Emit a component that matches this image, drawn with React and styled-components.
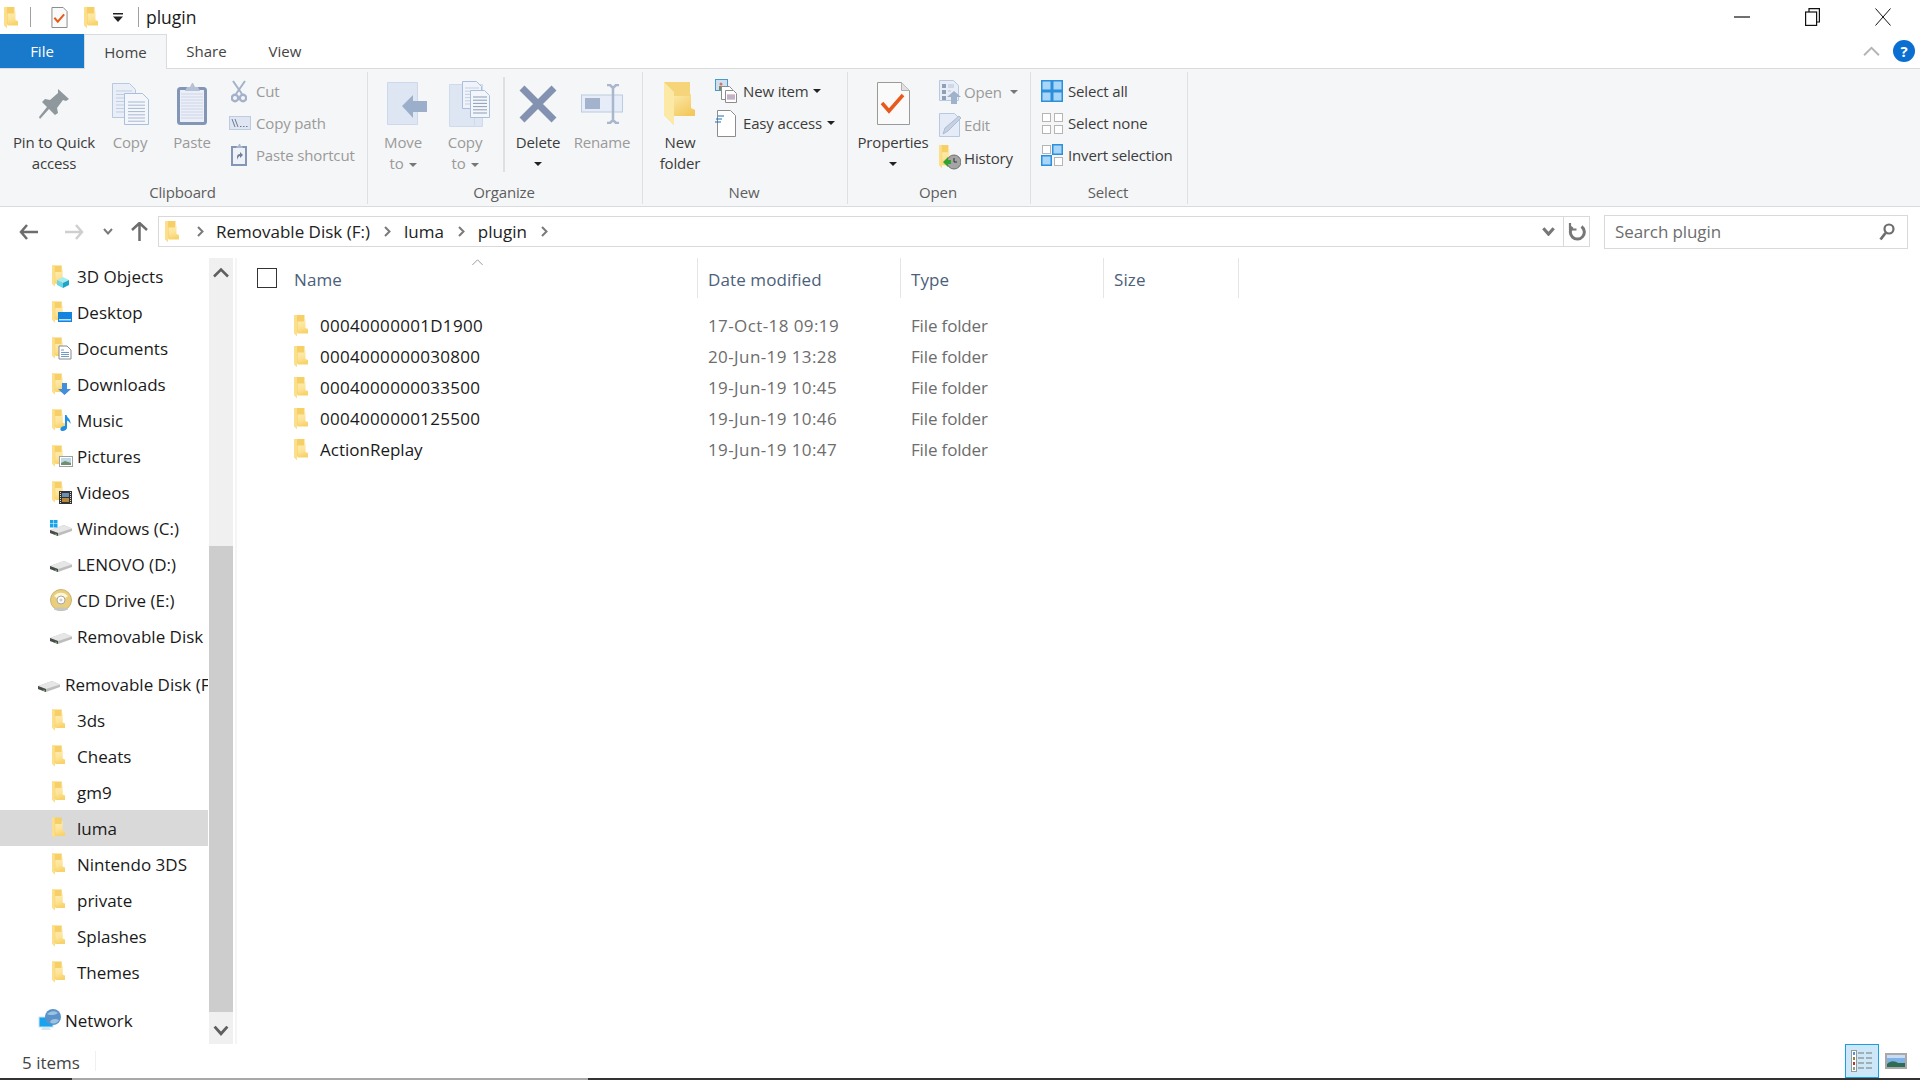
import React, { useId } from "react";
import styled, { createGlobalStyle } from "styled-components";

const Global = createGlobalStyle`
  html, body { margin: 0; padding: 0; height: 1080px; overflow: hidden; background: #fff; }
  body { font-family: "Open Sans", "Noto Sans", sans-serif; color: #1a1a1a; }
  * { box-sizing: border-box; }
`;

const Page = styled.div`
  width: 1920px; height: 1080px; display: flex; flex-direction: column; overflow: hidden; background: #fff;
`;

/* ---------- title bar ---------- */
const TitleBar = styled.div`display: flex; align-items: center; height: 34px; flex: none;`;
const QuickAccess = styled.div`display: flex; align-items: center; padding-left: 4px; flex: 1;`;
const VSep = styled.span`
  width: 1px; height: 20px; background: #a0a0a0; flex: none; margin-left: ${p => p.$ml}px;
`;
const QuickIcon = styled.span`display: flex; flex: none; margin-left: ${p => p.$ml || 0}px;`;
const WindowTitle = styled.span`margin-left: 7px; font-size: 17.5px; color: #1a1a1a;`;
const WinControls = styled.div`display: flex; align-items: center; padding-right: 29px; gap: 55px;`;

/* ---------- tabs ---------- */
const TabRow = styled.div`
  display: flex; align-items: stretch; height: 35px; flex: none; border-bottom: 1px solid #dadbdc; position: relative;
`;
const FileTab = styled.div`
  width: 84px; background: #1979ca; color: #fff; font-size: 15px;
  display: flex; align-items: center; justify-content: center;
`;
const Tab = styled.div`
  width: ${p => p.$w}px; display: flex; align-items: center; justify-content: center;
  font-size: 15px; color: #444; margin-bottom: ${p => (p.$active ? "-1px" : "0")};
  ${p => p.$active ? "background:#f5f6f7;border:1px solid #dadbdc;border-bottom:none;" : ""}
`;
const TabRight = styled.div`
  margin-left: auto; display: flex; align-items: center; gap: 13px; padding-right: 5px;
`;
const HelpDot = styled.div`
  width: 22px; height: 22px; border-radius: 50%; background: #0a6fd1; color: #fff;
  font-size: 15px; font-weight: 700; display: flex; align-items: center; justify-content: center;
`;

/* ---------- ribbon ---------- */
const Ribbon = styled.div`
  display: flex; height: 138px; flex: none; background: #f5f6f7; border-bottom: 1px solid #dadbdc;
  padding-top: 3px;
`;
const Group = styled.section`
  width: ${p => p.$w}px; flex: none; display: flex; flex-direction: column;
  border-right: 1px solid #dfe0e2; height: 132px;
`;
const GroupBody = styled.div`
  display: flex; flex: 1; padding-left: ${p => p.$pl}px; padding-top: 3px; min-height: 0;
`;
const GroupLabel = styled.div`
  height: 24px; text-align: center; font-size: 15px; letter-spacing: -0.15px; color: #5e5e5e; line-height: 24px;
  padding-right: 2px;
`;
const Large = styled.div`
  width: ${p => p.$w}px; flex: none; display: flex; flex-direction: column; align-items: center;
  color: ${p => (p.$off ? "#9a9a9a" : "#3c3c3c")}; font-size: 15px; letter-spacing: -0.15px;
`;
const LargeIcon = styled.div`
  height: 57px; display: flex; align-items: center; justify-content: center; flex: none;
  margin-left: ${p => p.$dx || 0}px;
`;
const LargeText = styled.div`line-height: 21px; text-align: center; white-space: nowrap;`;
const Caret = styled.span`
  display: inline-block; width: 0; height: 0; vertical-align: middle;
  border-left: 4px solid transparent; border-right: 4px solid transparent;
  border-top: 4px solid ${p => (p.$off ? "#777" : "#222")};
  margin-left: ${p => p.$ml ?? 5}px;
`;
const CaretLine = styled.div`height: 21px; display: flex; align-items: center; justify-content: center;`;
const VDivider = styled.div`width: 2px; flex: none; background: #dfe0e2; margin: 2px 1px 8px 7px;`;
const Stack = styled.div`display: flex; flex-direction: column; margin-left: ${p => p.$ml || 0}px;`;
const Small = styled.div`
  height: ${p => p.$h || 32}px; display: flex; align-items: center; white-space: nowrap;
  color: ${p => (p.$off ? "#9a9a9a" : "#3c3c3c")}; font-size: 15px; letter-spacing: -0.15px;
`;
const SmallIcon = styled.span`
  width: ${p => p.$w || 28}px; flex: none; display: flex; align-items: center;
  padding-left: ${p => p.$dx || 0}px;
`;

/* ---------- address row ---------- */
const AddressRow = styled.div`display: flex; align-items: center; height: 51px; flex: none; padding-bottom: 2px;`;
const NavButtons = styled.div`display: flex; align-items: center; width: 158px; flex: none; padding-left: 19px;`;
const NavBtn = styled.span`display: flex; margin-left: ${p => p.$ml || 0}px;`;
const AddressBox = styled.div`
  width: 1432px; height: 31px; flex: none; border: 1px solid #d9d9d9; display: flex; align-items: center;
  padding-left: 6px; font-size: 17px; color: #222;
`;
const Crumb = styled.span`margin-left: ${p => p.$ml}px; white-space: nowrap;`;
const Chev = styled.span`display: flex; margin-left: ${p => p.$ml}px;`;
const AddressEnd = styled.div`margin-left: auto; display: flex; align-items: center; height: 100%;`;
const Refresh = styled.div`
  width: 26px; height: 100%; border-left: 1px solid #d9d9d9; display: flex; align-items: center; justify-content: center;
  margin-left: 8px;
`;
const Search = styled.div`
  width: 304px; height: 34px; flex: none; margin-left: 14px; border: 1px solid #d9d9d9; display: flex; align-items: center;
  padding: 0 12px 0 10px; justify-content: space-between; font-size: 17px; letter-spacing: -0.1px; color: #6d6d6d;
`;

/* ---------- main area ---------- */
const Main = styled.div`display: flex; flex: 1; min-height: 0;`;
const NavPane = styled.nav`width: 208px; flex: none; overflow: hidden; margin-right: 1px;`;
const NavRow = styled.div`
  height: 36px; display: flex; align-items: center; gap: 3px; white-space: nowrap; font-size: 17px;
  padding-left: ${p => p.$pl}px; margin-top: ${p => p.$mt || 0}px; color: #1a1a1a;
  background: ${p => (p.$sel ? "#d9d9d9" : "transparent")};
`;
const NavIconBox = styled.span`width: 24px; height: 24px; flex: none; display: flex;`;
const Scrollbar = styled.div`
  width: 24px; flex: none; background: #f0f0f0; display: flex; flex-direction: column;
`;
const ScrollBtn = styled.div`
  height: ${p => p.$h}px; flex: none; display: flex; align-items: center; justify-content: center;
  padding: ${p => p.$pt || 0}px 0 ${p => p.$pb || 0}px;
`;
const ScrollThumb = styled.div`flex: 1; background: #cdcdcd;`;
const PaneGap = styled.div`width: 2px; flex: none; margin-left: 2px; background: #f5f5f5;`;

const Content = styled.div`flex: 1; min-width: 0; position: relative;`;
const SortArrow = styled.span`position: absolute; left: 234px; top: 0; display: flex;`;
const HeaderRow = styled.div`display: flex; align-items: stretch; height: 40px; margin-bottom: 12px; padding-left: 20px;`;
const CheckBox = styled.span`
  width: 20px; height: 20px; border: 1px solid #333; flex: none; margin: 10px 17px 0 0; background: #fff;
`;
const ColHead = styled.div`
  width: ${p => p.$w}px; flex: none; font-size: 17px; letter-spacing: 0.1px; color: #4c607a;
  padding: 9px 0 0 ${p => p.$pl}px; border-right: 1px solid #e5e5e5; line-height: 26px;
`;
const FileRow = styled.div`display: flex; align-items: center; height: 31px; padding-left: 57px; font-size: 17px;`;
const NameCell = styled.div`
  width: 404px; flex: none; display: flex; align-items: center; gap: 12px; color: #1a1a1a;
  letter-spacing: ${p => (p.$digits ? "0.3px" : "0")};
`;
const MetaCell = styled.div`
  width: 203px; flex: none; padding-left: 10px; color: #6d6d6d; font-size: 17px;
  letter-spacing: ${p => (p.$date ? "0.4px" : "-0.15px")};
`;

/* ---------- status ---------- */
const StatusBar = styled.div`height: 34px; flex: none; display: flex; align-items: center; padding-left: 22px; font-size: 17px; color: #444;`;
const StatusText = styled.span`margin-top: 2px;`;
const StatusSep = styled.span`width: 1px; height: 20px; background: #f0f0f0; margin-left: 15px;`;
const ViewSwitch = styled.div`margin-left: auto; display: flex; align-items: center; height: 100%; padding-right: 13px; gap: 6px;`;
const DetailsBtn = styled.div`
  width: 34px; height: 100%; border: 1px solid #1c9fdf; background: #cce8f8; display: flex; align-items: center; justify-content: center;
`;
const BottomStrip = styled.div`height: 2px; flex: none; display: flex;`;
const StripPart = styled.div`
  background: ${p => p.$c}; ${p => (p.$w ? `width:${p.$w}px;flex:none;` : "flex:1;")}
`;

/* ---------- drawings ---------- */
const FolderShape = ({ x = 0, y = 0, sx = 1, sy = 1 }) => {
  const id = useId();
  return (
    <g transform={`translate(${x} ${y}) scale(${sx} ${sy})`}>
      <defs>
        <linearGradient id={id} x1="0" y1="0" x2="0.2" y2="1">
          <stop offset="0" stopColor="#fdeeb5" />
          <stop offset="0.6" stopColor="#fce397" />
          <stop offset="1" stopColor="#f8d36a" />
        </linearGradient>
      </defs>
      <path d="M0 0h10.500v17.500H3V21L0 18z" fill="#f6cf66" />
      <path d="M0 0h3v21l-3-3z" fill="#fbdf8a" />
      <path d="M3.500 6.500h7V4l1 0v9l2.500 1v4.500H3.500z" fill={`url(#${id})`} />
    </g>
  );
};
const Folder = ({ w = 14, h = 21 }) => (
  <svg width={w} height={h} viewBox="0 0 14 21"><FolderShape /></svg>
);

const Cube = () => (
  <g>
    <path d="M7 16l6-3 6 3-6 3z" fill="#a8ecf0" />
    <path d="M7 16l6 3v5l-6-3z" fill="#6cd6e6" />
    <path d="M19 16l-6 3v5l6-3z" fill="#1ba5c9" />
  </g>
);
const NavIcon = ({ kind }) => (
  <svg width="24" height="24" viewBox="0 0 24 24">
    <FolderShape x={2} y={1.5} sx={0.93} />
    {kind === "3d" && <Cube />}
    {kind === "desktop" && <g><rect x="8" y="12" width="14" height="10" fill="#1584de" /><rect x="9" y="19" width="12" height="1.5" fill="#bfe2fb" /></g>}
    {kind === "docs" && <g><path d="M9 10h8l4 4v9H9z" fill="#fff" stroke="#8a8a8a" /><path d="M11 14h3M11 16.5h8M11 18.5h8M11 20.5h8" stroke="#6f9cc9" /></g>}
    {kind === "down" && <path d="M12 11h5v6h4l-6.5 6L8 17h4z" fill="#3f8fdc" />}
    {kind === "music" && <g><path d="M15 7l1.5 0c.5 3 4.5 4 4 9-.8-2-2-3-3.500-3.500V20c0 2-4 4-6 2.500s1-5 4-4.500z" fill="#1e8ee6" /></g>}
    {kind === "pics" && <g><rect x="9.500" y="12.500" width="13" height="10" fill="#fff" stroke="#a0a0a0" /><rect x="11" y="14" width="10" height="7" fill="#bfd8e8" /><path d="M11 19l4-2 6 2v2H11z" fill="#6f8f6f" /></g>}
    {kind === "vids" && <g><rect x="9" y="11" width="13" height="13" fill="#333" /><rect x="12" y="13" width="7" height="4" fill="#6a8fb0" /><rect x="12" y="18" width="7" height="4" fill="#b58a3a" /><path d="M10.500 12v11M20.500 12v11" stroke="#ddd" strokeDasharray="1 1" /></g>}
  </svg>
);
const Drive = ({ win }) => (
  <svg width="24" height="24" viewBox="1 0 24 24">
    <path d="M1 14l14-5 8 3.500v2.500l-14 5-8-3z" fill="#bdbdbd" />
    <path d="M1 14l14-5 8 3.500-14 4.500z" fill="#e6e6e6" />
    <path d="M1 14l8 3v3l-8-3z" fill="#4a4a4a" />
    <path d="M6 17.500l2 .8v1l-2-.8z" fill="#4fc35a" />
    {win && <g fill="#19a3e8"><rect x="1" y="4" width="3.500" height="3.500" /><rect x="5" y="4" width="3.500" height="3.500" /><rect x="1" y="8" width="3.500" height="3.500" /><rect x="5" y="8" width="3.500" height="3.500" /></g>}
  </svg>
);
const Cd = () => (
  <svg width="24" height="24" viewBox="1 0 24 24">
    <circle cx="12" cy="12" r="10.500" fill="#e9cf7c" stroke="#c8b274" />
    <path d="M5 8a9 9 0 0 1 14 0l-4 3a4 4 0 0 0-6 0z" fill="#fff6d8" />
    <circle cx="12" cy="12" r="4" fill="#fff" stroke="#a6a6a6" />
    <circle cx="12" cy="12" r="1.600" fill="#cfcfcf" />
    <ellipse cx="12" cy="21" rx="7" ry="1.800" fill="#c5c5c5" />
  </svg>
);
const Network = () => (
  <svg width="24" height="24" viewBox="0 0 24 24">
    <rect x="1" y="9" width="14" height="10" fill="#19a2ee" stroke="#c7e4f7" />
    <path d="M5 19h6l2 3H3z" fill="#d8e6ef" />
    <circle cx="15" cy="9" r="8" fill="#5b93c9" />
    <path d="M9 6c3-3 8-4 11-1-2 2-8 3-11 1zM12 14c1-3 5-4 9-2-1 3-6 5-9 2z" fill="#9cc2e2" />
  </svg>
);

const Pin = () => (
  <svg width="30" height="30" viewBox="0 0 30 30">
    <path d="M19 0l11 10-3 2-3-1-6 8 1 5-3 2-6-6-9 10-1-2 8-10-5-5 3-3 5 1 8-7z" fill="#8e989d" />
  </svg>
);
const pageLines = (x, y, w, n, step) => Array.from({ length: n }, (_, i) => `M${x} ${y + i * step}h${w}`).join("");
const CopyIcon = () => (
  <svg width="37" height="42" viewBox="0 0 37 42">
    <path d="M.5.5h17l6 6v28H.5z" fill="#eaeef7" stroke="#b7c8e0" />
    <path d={pageLines(4, 8, 16, 7, 3.500)} stroke="#c2cfe2" />
    <path d="M12.500 10.500h18l6 6v25h-24z" fill="#f3f6fb" stroke="#a9bfdc" />
    <path d={pageLines(16, 19, 17, 7, 3.200)} stroke="#a8b8cf" />
  </svg>
);
const PasteIcon = () => (
  <svg width="30" height="43" viewBox="0 0 30 43">
    <rect x="1.500" y="6.500" width="27" height="35" rx="2" fill="#eceff8" stroke="#8496b5" strokeWidth="3" />
    <path d={pageLines(4, 12, 22, 9, 3)} stroke="#ccd6e8" />
    <path d="M8 9l2-4h3l2-4h1l2 4h3l2 4z" fill="#b5c1d6" />
  </svg>
);
const Scissors = () => (
  <svg width="16" height="23" viewBox="0 0 16 23" fill="none" stroke="#a3b2ca" strokeWidth="2">
    <path d="M2 1l9 13M14 1L5 14" />
    <circle cx="4" cy="18" r="3.200" strokeWidth="2.400" /><circle cx="12" cy="18" r="3.200" strokeWidth="2.400" />
  </svg>
);
const CopyPathIcon = () => (
  <svg width="22" height="14" viewBox="0 0 22 14">
    <rect x=".5" y=".5" width="21" height="13" fill="#dfe6f2" stroke="#bccbe0" />
    <path d="M3 3l3 8M6 3l3 8" stroke="#6a7a94" strokeWidth="1" />
    <path d="M11 10.500h1.500M14 10.500h1.500M17 10.500h1.500" stroke="#6a7a94" />
  </svg>
);
const PasteShort = () => (
  <svg width="16" height="22" viewBox="0 0 16 22">
    <rect x="1" y="3" width="14" height="18" fill="#eef1f8" stroke="#8496b5" strokeWidth="2" />
    <path d="M5 4l1-2h1l1-2h1l1 2h1l1 2z" fill="#a9b6cc" />
    <path d="M6 16v-3c0-2 1-3 3-3V8l3 3-3 3v-2c-1 0-2 1-3 4z" fill="#6f7f98" />
  </svg>
);
const MoveTo = () => (
  <svg width="40" height="44" viewBox="0 0 40 44">
    <path d="M.5.500h30v42H.5z" fill="#dee6f3" stroke="#cdd9ea" />
    <path d="M15 24L26 13v6h14v11H26v6z" fill="#9cafca" />
  </svg>
);
const CopyTo = () => (
  <svg width="41" height="46" viewBox="0 0 41 46">
    <path d="M.5 3.500h33v42H.5z" fill="#dee6f3" stroke="#cfdaea" />
    <path d="M25.500 3.500v42" stroke="#cfdaea" />
    <path d="M13.500.5h14l5 5v22h-19z" fill="#f0f4fa" stroke="#a9bfdc" />
    <path d={pageLines(16, 7, 14, 6, 3.200)} stroke="#c2cfe2" />
    <path d="M21.500 9.500h14l5 5v22h-19z" fill="#f3f6fb" stroke="#a9bfdc" />
    <path d={pageLines(24, 16, 14, 6, 3.200)} stroke="#8c9db7" />
  </svg>
);
const DeleteIcon = () => (
  <svg width="38" height="38" viewBox="0 0 38 38"><path d="M3 3l32 32M35 3L3 35" stroke="#8292b0" strokeWidth="7" /></svg>
);
const RenameIcon = () => (
  <svg width="42" height="40" viewBox="0 0 42 40">
    <rect x=".5" y="11" width="41" height="17" fill="#e6edf8" stroke="#bccbe0" />
    <rect x="4" y="14" width="15" height="11" fill="#a4b3cd" />
    <path d="M26 1h3l3 3 3-3h3M32 4v31M26 39h3l3-3 3 3h3" stroke="#a9b7cd" strokeWidth="2.500" fill="none" />
  </svg>
);
const NewFolderIcon = () => {
  const id = useId();
  return (
    <svg width="32" height="43" viewBox="0 0 32 43">
      <defs>
        <linearGradient id={id} x1="0" y1="0" x2="0.6" y2="1">
          <stop offset="0" stopColor="#fce9a8" />
          <stop offset="1" stopColor="#f3c95f" />
        </linearGradient>
      </defs>
      <path d="M0 0h26v34H10v9l-10-10z" fill="#f6d479" />
      <path d="M0 0l10 10v33L0 33z" fill="#fde9a6" />
      <path d="M10 14h16v-2l1 0v14l4 2v6H10z" fill={`url(#${id})`} />
    </svg>
  );
};
const NewItem = () => (
  <svg width="22" height="24" viewBox="0 0 22 24">
    <rect x=".5" y=".5" width="12" height="11" fill="#cfe0ee" stroke="#4a9ac8" />
    <path d="M4 7h5v4H4z" fill="#7a8a5a" /><circle cx="6" cy="5" r="1.500" fill="#c77" />
    <path d="M6.500 7.500h8l3 3v10h-11z" fill="#fff" stroke="#8c8c8c" />
    <path d="M10.500 11.500h8l3 3v9h-11z" fill="#fff" stroke="#8c8c8c" />
    <path d="M12 16h8M12 18h8M12 20h8" stroke="#d88" /><path d="M12 17h8M12 19h8" stroke="#88a8d8" />
  </svg>
);
const EasyAccess = () => (
  <svg width="21" height="27" viewBox="0 0 21 27">
    <path d="M2.500.5h13l5 5v21h-18z" fill="#fff" stroke="#8c8c8c" />
    <path d="M3 6h6M1 9h6M0 12h6" stroke="#1d6fb8" strokeWidth="1.200" />
  </svg>
);
const PropsIcon = () => (
  <svg width="33" height="43" viewBox="0 0 33 43">
    <path d="M.5.5h24l8 8v34H.5z" fill="#fafafa" stroke="#9a9a9a" />
    <path d="M24.500.5v8h8" fill="#e0e0e0" stroke="#b0b0b0" />
    <path d="M5 21l7 8 14-16" fill="none" stroke="#e8591c" strokeWidth="3.500" />
  </svg>
);
const OpenIcon = () => (
  <svg width="22" height="24" viewBox="0 0 22 24">
    <path d="M.5.5h14l5 5v15H.5z" fill="#e8edf6" stroke="#b7c8e0" />
    <path d="M3 4h4v4H3zM3 10h4v4H3zM3 16h4v4H3z" fill="#8fa0bb" />
    <path d="M9 5h6M9 7h6M9 11h3" stroke="#b7c4d8" />
    <path d="M15 11l7 6h-4v7h-6v-7H8z" fill="#9fb1cb" />
  </svg>
);
const EditIcon = () => (
  <svg width="22" height="24" viewBox="0 0 22 24">
    <path d="M.5.5h15l5 5v18H.5z" fill="#e6ecf7" stroke="#b7c8e0" />
    <path d="M4 21l2-6L20 3l2 2L9 18z" fill="#c5d0e2" stroke="#aebccf" />
  </svg>
);
const HistoryIcon = () => (
  <svg width="22" height="25" viewBox="0 0 22 25">
    <FolderShape sx={0.9} sy={1.1} />
    <circle cx="15" cy="17" r="7" fill="#a5a5a5" stroke="#707070" />
    <path d="M15 13v4h3" stroke="#333" fill="none" />
    <path d="M4 17l5-5v3h3v4H9v3z" fill="#2fa32f" />
  </svg>
);
const Grid = ({ cells }) => (
  <svg width="22" height="22" viewBox="0 0 22 22">
    {cells.map(([c, r, blue], i) =>
      blue ? (
        <rect key={i} x={c * 11 + 0.75} y={r * 11 + 0.75} width="9.500" height="9.500" fill="#a7d6f9" stroke="#2c8fdc" strokeWidth="1.500" />
      ) : (
        <rect key={i} x={c * 12 + 1.5} y={r * 12 + 1.5} width="8" height="8" fill="#fff" stroke="#b5b5b5" />
      )
    )}
  </svg>
);
const Arrow = ({ c, flip }) => (
  <svg width="19" height="16" viewBox="0 0 19 16" style={flip ? { transform: "scaleX(-1)" } : undefined}>
    <path d="M8 1L2 8l6 7M2 8h17" fill="none" stroke={c} strokeWidth="2.500" />
  </svg>
);
const UpArrow = () => (
  <svg width="17" height="19" viewBox="0 0 17 19"><path d="M1 8l7.500-7L16 8M8.500 1v18" fill="none" stroke="#6d6d6d" strokeWidth="2.500" /></svg>
);
const ChevDown = ({ c = "#7a7a7a", w = 10, sw = 2 }) => (
  <svg width={w} height={w * 0.7} viewBox="0 0 10 7"><path d="M1 1l4 4.500L9 1" fill="none" stroke={c} strokeWidth={sw} /></svg>
);
const ChevRight = () => (
  <svg width="7" height="11" viewBox="0 0 7 11"><path d="M1 1l4.500 4.500L1 10" fill="none" stroke="#7a7a7a" strokeWidth="2" /></svg>
);
const ChevUp = ({ w = 16, h = 11, c = "#5f5f5f", sw = 2.500 }) => (
  <svg width={w} height={h} viewBox="0 0 16 11"><path d="M1 9.500L8 2.500l7 7" fill="none" stroke={c} strokeWidth={sw} /></svg>
);
const RefreshIcon = () => (
  <svg width="18" height="18" viewBox="0 0 18 18">
    <path d="M4.500 4A7 7 0 1 0 13.500 3.500" fill="none" stroke="#777" strokeWidth="3" />
    <path d="M2 0v6.500h6.500" fill="none" stroke="#777" strokeWidth="2.200" />
  </svg>
);
const SearchIcon = () => (
  <svg width="16" height="18" viewBox="0 0 16 18">
    <circle cx="10" cy="6" r="4.500" fill="none" stroke="#6d6d6d" strokeWidth="2.200" />
    <path d="M6.500 10L1.500 16.500" stroke="#6d6d6d" strokeWidth="2.800" />
  </svg>
);
const DetailsIcon = () => (
  <svg width="22" height="22" viewBox="0 0 22 22">
    <rect x="0.500" y="0.500" width="5" height="21" fill="#fff" stroke="#999" />
    <rect x="2" y="2" width="2" height="3" fill="#5b93c9" /><rect x="2" y="7" width="2" height="3" fill="#8a8a3a" />
    <rect x="2" y="12" width="2" height="3" fill="#b33" /><rect x="2" y="17" width="2" height="3" fill="#8aa07a" />
    <path d="M7 3h6M15 3h6M7 8h6M15 8h6M7 13h6M15 13h6M7 18h6M15 18h6" stroke="#777" strokeWidth="1.200" />
  </svg>
);
const LargeIconsIcon = () => (
  <svg width="22" height="16" viewBox="0 0 22 16">
    <rect x="1" y="1" width="20" height="14" fill="#7fb2e5" stroke="#a8a8a8" strokeWidth="2" />
    <path d="M2 11c4-4 8-3 11-1l7 0v4H2z" fill="#2f6b55" />
    <rect x="2" y="2" width="18" height="3" fill="#c5def5" />
  </svg>
);

/* ---------- data ---------- */
const libs = [["3D Objects", "3d"], ["Desktop", "desktop"], ["Documents", "docs"], ["Downloads", "down"], ["Music", "music"], ["Pictures", "pics"], ["Videos", "vids"]];
const sub = ["3ds", "Cheats", "gm9", "luma", "Nintendo 3DS", "private", "Splashes", "Themes"];
const files = [
  ["00040000001D1900", "17-Oct-18 09:19", true],
  ["0004000000030800", "20-Jun-19 13:28", true],
  ["0004000000033500", "19-Jun-19 10:45", true],
  ["0004000000125500", "19-Jun-19 10:46", true],
  ["ActionReplay", "19-Jun-19 10:47", false],
];

const L = ({ w, off, icon, lines }) => (
  <Large $w={w} $off={off}>
    <LargeIcon>{icon}</LargeIcon>
    {lines.map(t => <LargeText key={t}>{t}</LargeText>)}
  </Large>
);

export default function App() {
  return (
    <Page>
      <Global />
      <TitleBar>
        <QuickAccess>
          <Folder />
          <VSep $ml={12} />
          <QuickIcon $ml={20}><svg width="17" height="21" viewBox="0 0 33 43"><path d="M1 1h23l8 8v33H1z" fill="#fafafa" stroke="#8a8a8a" strokeWidth="2" /><path d="M6 22l7 8 13-15" fill="none" stroke="#e8591c" strokeWidth="4" /></svg></QuickIcon>
          <QuickIcon $ml={16}><Folder /></QuickIcon>
          <QuickIcon $ml={15}><svg width="10" height="9" viewBox="0 0 10 9"><path d="M0 0h10v1.500H0zM0 3.500h10L5 9z" fill="#222" /></svg></QuickIcon>
          <VSep $ml={15} />
          <WindowTitle>plugin</WindowTitle>
        </QuickAccess>
        <WinControls>
          <svg width="16" height="2" viewBox="0 0 16 2"><path d="M0 1h16" stroke="#111" strokeWidth="1.200" /></svg>
          <svg width="15" height="18" viewBox="0 0 15 18" fill="none" stroke="#111" strokeWidth="1.200"><rect x=".6" y="4" width="11" height="13.400" fill="#fff" /><path d="M4 4V.6h10.400V14H11.600" /></svg>
          <svg width="16" height="18" viewBox="0 0 16 18"><path d="M.5.500l15 17M15.500.500l-15 17" stroke="#111" strokeWidth="1" /></svg>
        </WinControls>
      </TitleBar>

      <TabRow>
        <FileTab>File</FileTab>
        <Tab $w={83} $active>Home</Tab>
        <Tab $w={79}>Share</Tab>
        <Tab $w={78}>View</Tab>
        <TabRight>
          <ChevUp w={17} h={12} c="#b5b5b5" sw={1.800} />
          <HelpDot>?</HelpDot>
        </TabRight>
      </TabRow>

      <Ribbon>
        <Group $w={368}>
          <GroupBody $pl={4}>
            <L w={100} icon={<Pin />} lines={["Pin to Quick", "access"]} />
            <L w={52} off icon={<CopyIcon />} lines={["Copy"]} />
            <L w={72} off icon={<PasteIcon />} lines={["Paste"]} />
            <Stack>
              <Small $off><SmallIcon $dx={3}><Scissors /></SmallIcon>Cut</Small>
              <Small $off><SmallIcon $dx={1}><CopyPathIcon /></SmallIcon>Copy path</Small>
              <Small $off><SmallIcon $dx={3}><PasteShort /></SmallIcon>Paste shortcut</Small>
            </Stack>
          </GroupBody>
          <GroupLabel>Clipboard</GroupLabel>
        </Group>
        <Group $w={275}>
          <GroupBody $pl={4}>
            <Large $w={62} $off>
              <LargeIcon $dx={7}><MoveTo /></LargeIcon>
              <LargeText>Move</LargeText>
              <LargeText>to<Caret $off /></LargeText>
            </Large>
            <Large $w={62} $off>
              <LargeIcon $dx={8}><CopyTo /></LargeIcon>
              <LargeText>Copy</LargeText>
              <LargeText>to<Caret $off /></LargeText>
            </Large>
            <VDivider />
            <Large $w={64}>
              <LargeIcon><DeleteIcon /></LargeIcon>
              <LargeText>Delete</LargeText>
              <CaretLine><Caret $ml={0} /></CaretLine>
            </Large>
            <L w={64} off icon={<RenameIcon />} lines={["Rename"]} />
          </GroupBody>
          <GroupLabel>Organize</GroupLabel>
        </Group>
        <Group $w={205}>
          <GroupBody $pl={2}>
            <L w={70} icon={<NewFolderIcon />} lines={["New", "folder"]} />
            <Stack>
              <Small><SmallIcon><NewItem /></SmallIcon>New item<Caret /></Small>
              <Small><SmallIcon><EasyAccess /></SmallIcon>Easy access<Caret /></Small>
            </Stack>
          </GroupBody>
          <GroupLabel>New</GroupLabel>
        </Group>
        <Group $w={183}>
          <GroupBody $pl={3}>
            <Large $w={84}>
              <LargeIcon><PropsIcon /></LargeIcon>
              <LargeText>Properties</LargeText>
              <CaretLine><Caret $ml={0} /></CaretLine>
            </Large>
            <Stack $ml={4}>
              <Small $off $h={33}><SmallIcon $w={25}><OpenIcon /></SmallIcon>Open<Caret $off $ml={8} /></Small>
              <Small $off $h={33}><SmallIcon $w={25}><EditIcon /></SmallIcon>Edit</Small>
              <Small $h={33}><SmallIcon $w={25}><HistoryIcon /></SmallIcon>History</Small>
            </Stack>
          </GroupBody>
          <GroupLabel>Open</GroupLabel>
        </Group>
        <Group $w={157}>
          <GroupBody $pl={10}>
            <Stack>
              <Small><SmallIcon $w={27}><Grid cells={[[0, 0, 1], [1, 0, 1], [0, 1, 1], [1, 1, 1]]} /></SmallIcon>Select all</Small>
              <Small><SmallIcon $w={27}><Grid cells={[[0, 0], [1, 0], [0, 1], [1, 1]]} /></SmallIcon>Select none</Small>
              <Small><SmallIcon $w={27}><Grid cells={[[0, 0], [1, 0, 1], [0, 1, 1], [1, 1]]} /></SmallIcon>Invert selection</Small>
            </Stack>
          </GroupBody>
          <GroupLabel>Select</GroupLabel>
        </Group>
      </Ribbon>

      <AddressRow>
        <NavButtons>
          <NavBtn><Arrow c="#6d6d6d" /></NavBtn>
          <NavBtn $ml={27}><Arrow c="#cfcfcf" flip /></NavBtn>
          <NavBtn $ml={19}><ChevDown /></NavBtn>
          <NavBtn $ml={18}><UpArrow /></NavBtn>
        </NavButtons>
        <AddressBox>
          <Folder />
          <Chev $ml={18}><ChevRight /></Chev>
          <Crumb $ml={12}>Removable Disk (F:)</Crumb>
          <Chev $ml={14}><ChevRight /></Chev>
          <Crumb $ml={13}>luma</Crumb>
          <Chev $ml={14}><ChevRight /></Chev>
          <Crumb $ml={13}>plugin</Crumb>
          <Chev $ml={14}><ChevRight /></Chev>
          <AddressEnd>
            <ChevDown c="#777" w={13} sw={2.400} />
            <Refresh><RefreshIcon /></Refresh>
          </AddressEnd>
        </AddressBox>
        <Search>Search plugin<SearchIcon /></Search>
      </AddressRow>

      <Main>
        <NavPane>
          {libs.map(([t, k]) => (
            <NavRow key={t} $pl={50}><NavIconBox><NavIcon kind={k} /></NavIconBox>{t}</NavRow>
          ))}
          <NavRow $pl={50}><NavIconBox><Drive win /></NavIconBox>Windows (C:)</NavRow>
          <NavRow $pl={50}><NavIconBox><Drive /></NavIconBox>LENOVO (D:)</NavRow>
          <NavRow $pl={50}><NavIconBox><Cd /></NavIconBox>CD Drive (E:)</NavRow>
          <NavRow $pl={50}><NavIconBox><Drive /></NavIconBox>Removable Disk</NavRow>
          <NavRow $pl={38} $mt={12}><NavIconBox><Drive /></NavIconBox>Removable Disk (F:)</NavRow>
          {sub.map(t => (
            <NavRow key={t} $pl={50} $sel={t === "luma"}><NavIconBox><NavIcon /></NavIconBox>{t}</NavRow>
          ))}
          <NavRow $pl={38} $mt={12}><NavIconBox><Network /></NavIconBox>Network</NavRow>
        </NavPane>
        <Scrollbar>
          <ScrollBtn $h={34} $pb={6}><ChevUp /></ScrollBtn>
          <ScrollBtn $h={254} />
          <ScrollThumb />
          <ScrollBtn $h={32} $pt={5}><ChevDown c="#5f5f5f" w={16} sw={1.800} /></ScrollBtn>
        </Scrollbar>
        <PaneGap />
        <Content>
          <SortArrow><ChevUp w={13} h={8} c="#8a8a8a" sw={1.200} /></SortArrow>
          <HeaderRow>
            <CheckBox />
            <ColHead $w={404} $pl={0}>Name</ColHead>
            <ColHead $w={203} $pl={10}>Date modified</ColHead>
            <ColHead $w={203} $pl={10}>Type</ColHead>
            <ColHead $w={135} $pl={10}>Size</ColHead>
          </HeaderRow>
          {files.map(([n, d, digits]) => (
            <FileRow key={n}>
              <NameCell $digits={digits}><Folder />{n}</NameCell>
              <MetaCell $date>{d}</MetaCell>
              <MetaCell>File folder</MetaCell>
            </FileRow>
          ))}
        </Content>
      </Main>

      <StatusBar>
        <StatusText>5 items</StatusText><StatusSep />
        <ViewSwitch>
          <DetailsBtn><DetailsIcon /></DetailsBtn>
          <LargeIconsIcon />
        </ViewSwitch>
      </StatusBar>
      <BottomStrip>
        <StripPart $w={72} $c="#333" />
        <StripPart $w={516} $c="#a8a8a8" />
        <StripPart $c="#333" />
      </BottomStrip>
    </Page>
  );
}
